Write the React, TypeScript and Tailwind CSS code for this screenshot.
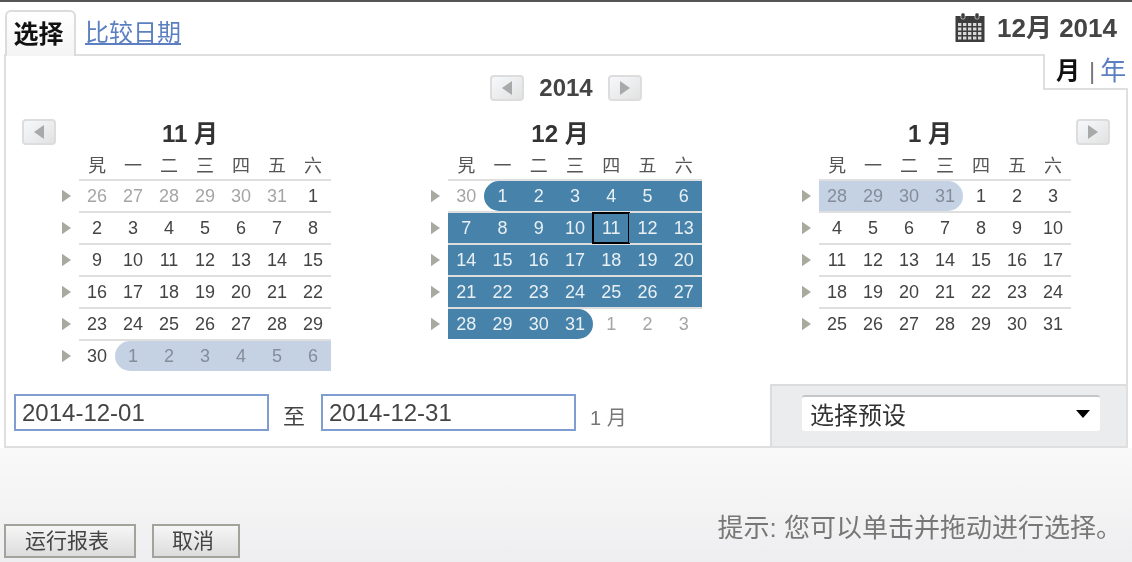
const cjk = "font-['Liberation_Sans','Noto_Sans_CJK_SC',sans-serif]";

type Cell = { d: number; muted?: boolean; tone?: "dark" | "light"; start?: boolean; end?: boolean; today?: boolean };

const weekdays = ["旯", "一", "二", "三", "四", "五", "六"];

function range(from: number, to: number, extra: Partial<Cell> = {}): Cell[] {
  const out: Cell[] = [];
  for (let d = from; d <= to; d++) out.push({ d, ...extra });
  return out;
}

const nov: Cell[] = [
  ...range(26, 31, { muted: true }),
  ...range(1, 30),
  { d: 1, muted: true, tone: "light", start: true },
  ...range(2, 6, { muted: true, tone: "light" }),
];

const dec: Cell[] = [
  { d: 30, muted: true },
  { d: 1, tone: "dark", start: true },
  ...range(2, 10, { tone: "dark" }),
  { d: 11, tone: "dark", today: true },
  ...range(12, 30, { tone: "dark" }),
  { d: 31, tone: "dark", end: true },
  ...range(1, 3, { muted: true }),
];

const jan: Cell[] = [
  ...range(28, 30, { muted: true, tone: "light" }),
  { d: 31, muted: true, tone: "light", end: true },
  ...range(1, 31),
];

function Triangle({ dir, className }: { dir: "left" | "right"; className: string }) {
  return (
    <svg viewBox="0 0 10 14" className={className} fill="currentColor">
      <path d={dir === "left" ? "M10 0V14L0 7Z" : "M0 0V14L10 7Z"} />
    </svg>
  );
}

function NavButton({ dir, className = "" }: { dir: "left" | "right"; className?: string }) {
  return (
    <button
      type="button"
      className={`flex h-[26px] w-[34px] shrink-0 items-center justify-center rounded-[4px] border-2 border-[#dddddd] bg-gradient-to-br from-[#f6f8fb] to-[#e2e2e2] text-[#a9a9a9] ${className}`}
    >
      <Triangle dir={dir} className="h-[14px] w-[10px]" />
    </button>
  );
}

function Month({ title, cells, gridClass, className = "" }: { title: string; cells: Cell[]; gridClass: string; className?: string }) {
  const rows: Cell[][] = [];
  for (let i = 0; i < cells.length; i += 7) rows.push(cells.slice(i, i + 7));

  return (
    <div className={`flex shrink-0 ${className}`}>
      <div className="w-[17px] pt-[60px]">
        {rows.map((_, i) => (
          <div key={i} className="flex h-[32px] items-center pt-[2px]">
            <Triangle dir="right" className="h-[14px] w-[9px] text-[#a8a99f]" />
          </div>
        ))}
      </div>
      <div className={gridClass}>
        <div className="mt-px h-[30px] pr-[30px] text-center text-[24px] leading-[28px] font-bold text-[#333333]">{title}</div>
        <div className="grid h-[29px] grid-cols-7 text-center text-[18px] leading-[33px] text-[#555555]">
          {weekdays.map((w) => (
            <div key={w}>{w}</div>
          ))}
        </div>
        {rows.map((row, i) => (
          <div key={i} className="grid h-[32px] grid-cols-7 border-t-2 border-[#dfdfdf] text-center text-[18px] leading-[30px]">
            {row.map((c, j) => (
              <div
                key={j}
                className={[
                  c.tone === "dark" ? "bg-[#4682a9] text-[#e9f0f5]" : "",
                  c.tone === "light" ? "bg-[#c4d2e4] text-[#848d99]" : "",
                  !c.tone && c.muted ? "text-[#a5a5a5]" : "",
                  !c.tone && !c.muted ? "text-[#444444]" : "",
                  c.start ? "rounded-l-[15px]" : "",
                  c.end ? "rounded-r-[15px]" : "",
                  c.today ? "outline-2 -outline-offset-1 outline-black" : "",
                ].join(" ")}
              >
                {c.d}
              </div>
            ))}
          </div>
        ))}
      </div>
    </div>
  );
}

function CalendarIcon() {
  return (
    <svg viewBox="0 0 30 30" className="h-[30px] w-[30px] text-[#3d3d3d]">
      <rect x="0.5" y="3" width="29" height="26" fill="currentColor" />
      <rect x="6" y="0" width="4" height="6" rx="1.5" fill="currentColor" stroke="#fff" strokeWidth="0.6" />
      <rect x="20" y="0" width="4" height="6" rx="1.5" fill="currentColor" stroke="#fff" strokeWidth="0.6" />
      <g fill="#d8d8d8">
        {[10, 14.5, 19, 23.5].map((y) =>
          [3, 8, 13, 18, 23].map((x) => <rect key={`${x}-${y}`} x={x} y={y} width="3.4" height="3" />),
        )}
      </g>
    </svg>
  );
}

export default function App() {
  return (
    <div className={`flex h-[562px] w-[1132px] flex-col overflow-hidden border-t-2 border-[#555555] bg-white blur-[0.5px] ${cjk}`}>
      <div className="flex h-[52px] shrink-0 items-end pl-[5px] pr-[15px]">
        <div className="relative z-10 -mb-[2px] h-[46px] w-[71px] rounded-t-[6px] border-2 border-b-0 border-[#dcdcdc] bg-gradient-to-b from-[#ffffff] to-[#f4f4f4] pr-[4px] text-center text-[25px] leading-[44px] font-bold text-[#111111]">
          选择
        </div>
        <a className="mb-[3px] ml-[9px] text-[24px] leading-[36px] text-[#5b7fc0] underline">比较日期</a>
        <div className="mb-[8px] ml-auto flex items-center">
          <CalendarIcon />
          <span className="ml-[12px] text-[26px] leading-[36px] font-bold text-[#444444]">12月 2014</span>
        </div>
      </div>

      <div className="relative ml-[4px] mr-[4px] flex h-[394px] shrink-0 flex-col border-2 border-[#dfdfdf] bg-white">
        <div className="absolute -top-[2px] -right-[2px] flex h-[36px] w-[85px] items-center border-b-2 border-l-2 border-[#dfdfdf] bg-white pl-[11px] text-[24px] leading-[34px]">
          <span className="font-bold text-[#111111]">月</span>
          <span className="ml-[9px] text-[#777777]">|</span>
          <span className="ml-[5px] text-[26px] text-[#5b7fc0]">年</span>
        </div>

        <div className="mt-[19px] flex h-[26px] items-center justify-center">
          <NavButton dir="left" />
          <span className="mx-[15px] text-[24px] font-bold text-[#444444]">2014</span>
          <NavButton dir="right" />
        </div>

        <div className="mt-[18px] flex h-[252px] items-start pl-[16px]">
          <NavButton dir="left" />
          <Month title="11 月" cells={nov} gridClass="w-[252px]" className="ml-[6px]" />
          <Month title="12 月" cells={dec} gridClass="w-[254px]" className="ml-[100px]" />
          <Month title="1 月" cells={jan} gridClass="w-[252px]" className="ml-[100px]" />
          <NavButton dir="right" className="ml-[5px]" />
        </div>

        <div className="mt-auto flex h-[62px] items-stretch">
          <div className="flex flex-1 items-start pl-[8px] pt-[10px] text-[#444444]">
            <div className="flex h-[37px] w-[255px] items-center border-2 border-[#7f9dd1] pl-[6px] text-[24px]">2014-12-01</div>
            <span className="w-[52px] pt-[6px] pr-[2px] text-center text-[22px]">至</span>
            <div className="flex h-[37px] w-[255px] items-center border-2 border-[#7f9dd1] pl-[6px] text-[24px]">2014-12-31</div>
            <span className="ml-[14px] pt-[9px] text-[20px] text-[#777777]">1 月</span>
          </div>
          <div className="flex w-[356px] items-start border-t-2 border-l-2 border-[#dcdcdc] bg-[#ebecee] pl-[30px] pt-[9px]">
            <div className="flex h-[36px] w-[298px] items-center justify-between rounded-[3px] border-t-2 border-[#c4c5c9] bg-white pl-[8px] pr-[10px] text-[24px] text-[#333333]">
              <span className="pt-[4px]">选择预设</span>
              <svg viewBox="0 0 14 8" className="h-[8px] w-[14px]">
                <path d="M0 0H14L7 8Z" fill="#000" />
              </svg>
            </div>
          </div>
        </div>
      </div>

      <div className="flex flex-1 items-end justify-between bg-gradient-to-b from-[#f9f9f9] to-[#eeeef0] pb-[4px] pl-[4px] pr-[10px]">
        <div className="flex gap-[16px]">
          <button type="button" className="h-[34px] w-[132px] border-2 border-[#a0a49a] bg-gradient-to-b from-[#f6f6f6] to-[#dcdcdc] pr-[6px] text-[21px] leading-[26px] text-[#444444]">
            运行报表
          </button>
          <button type="button" className="h-[34px] w-[88px] border-2 border-[#a0a49a] bg-gradient-to-b from-[#f6f6f6] to-[#dcdcdc] pr-[6px] text-[21px] leading-[26px] text-[#444444]">
            取消
          </button>
        </div>
        <span className="mb-[12px] text-[26px] leading-[36px] text-[#777777]">提示: 您可以单击并拖动进行选择。</span>
      </div>
    </div>
  );
}
